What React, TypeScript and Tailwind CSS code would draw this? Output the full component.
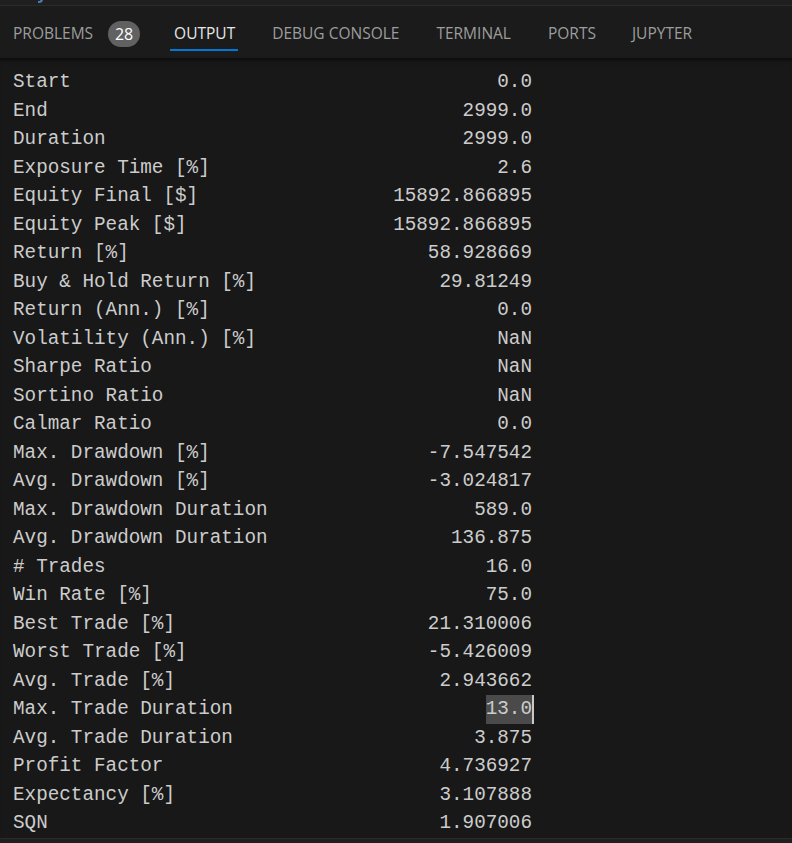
const tabs = [
  { label: "PROBLEMS", badge: "28", ml: "ml-[13px]" },
  { label: "OUTPUT", active: true, ml: "ml-[30px]" },
  { label: "DEBUG CONSOLE", ml: "ml-[34px]" },
  { label: "TERMINAL", ml: "ml-[37px]" },
  { label: "PORTS", ml: "ml-[37px]" },
  { label: "JUPYTER", ml: "ml-[36px]" },
];

const stats: [string, string][] = [
  ["Start", "0.0"],
  ["End", "2999.0"],
  ["Duration", "2999.0"],
  ["Exposure Time [%]", "2.6"],
  ["Equity Final [$]", "15892.866895"],
  ["Equity Peak [$]", "15892.866895"],
  ["Return [%]", "58.928669"],
  ["Buy & Hold Return [%]", "29.81249"],
  ["Return (Ann.) [%]", "0.0"],
  ["Volatility (Ann.) [%]", "NaN"],
  ["Sharpe Ratio", "NaN"],
  ["Sortino Ratio", "NaN"],
  ["Calmar Ratio", "0.0"],
  ["Max. Drawdown [%]", "-7.547542"],
  ["Avg. Drawdown [%]", "-3.024817"],
  ["Max. Drawdown Duration", "589.0"],
  ["Avg. Drawdown Duration", "136.875"],
  ["# Trades", "16.0"],
  ["Win Rate [%]", "75.0"],
  ["Best Trade [%]", "21.310006"],
  ["Worst Trade [%]", "-5.426009"],
  ["Avg. Trade [%]", "2.943662"],
  ["Max. Trade Duration", "13.0"],
  ["Avg. Trade Duration", "3.875"],
  ["Profit Factor", "4.736927"],
  ["Expectancy [%]", "3.107888"],
  ["SQN", "1.907006"],
];

export default function App() {
  return (
    <div className="w-[792px] h-[843px] overflow-hidden bg-[#181818] flex flex-col">
      {/* cut off editor above */}
      <div className="h-[6px] bg-[#1f1f1f] border-b border-[#2b2b2b] relative shrink-0">
        <span className="absolute left-[38px] -top-[3px] w-[5px] h-[6px] border-r-2 border-b-2 border-[#4a7bb0] rounded-br-[4px]" />
      </div>

      <div className="h-[52px] bg-[#1b1b1b] flex items-center pt-[4px] shrink-0 font-['Open_Sans',sans-serif] text-[15.5px]">
        {tabs.map((t) => (
          <div key={t.label} className={`relative flex items-center h-full ${t.ml}`}>
            <span className={t.active ? "text-[#e7e7e7] pl-[4px] pr-[3px]" : "text-[#9d9d9d]"}>
              {t.label}
            </span>
            {t.badge && (
              <span className="ml-[15px] h-[26px] w-[32px] rounded-full bg-[#616161] text-white text-[16px] flex items-center justify-center">
                {t.badge}
              </span>
            )}
            {t.active && (
              <span className="absolute left-0 right-0 bottom-[7px] h-[2px] bg-[#0078d4]" />
            )}
          </div>
        ))}
      </div>

      <div className="flex-1 relative pt-[10px] pl-[13px] font-['Liberation_Mono',monospace] text-[19.3px] leading-[28.5px] text-[#cccccc] shadow-[inset_0_6px_6px_-6px_#000000]">
        {stats.map(([k, v]) => (
          <div key={k} className="flex justify-between w-[519px] whitespace-pre">
            <span>{k}</span>
            {k === "Max. Trade Duration" ? (
              <span className="bg-[#4a4a4a] border-r-2 border-[#c8c8c8] -mr-[2px]">{v}</span>
            ) : (
              <span>{v}</span>
            )}
          </div>
        ))}
      </div>

      <div className="h-[7px] bg-[#1f1f1f] border-t border-[#2b2b2b] shrink-0" />
    </div>
  );
}
